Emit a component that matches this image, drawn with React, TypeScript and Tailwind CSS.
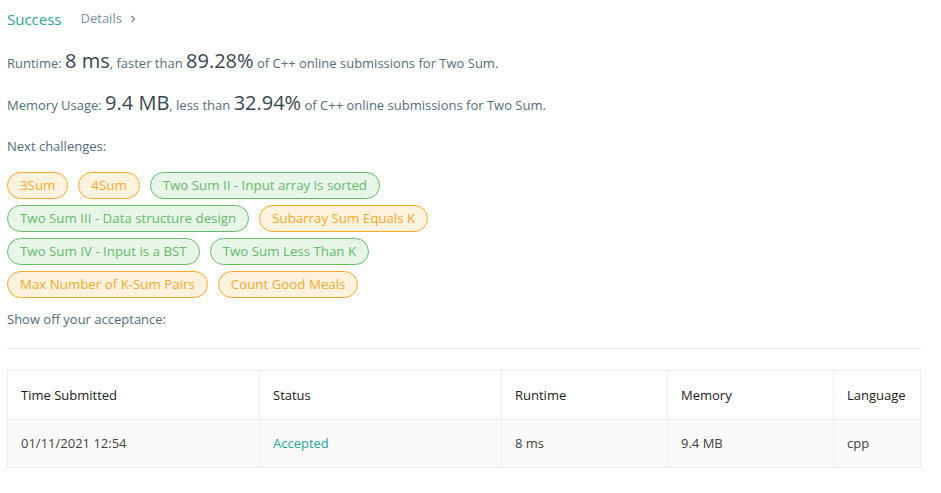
import React from 'react';

type Tag = { label: string; tone: 'orange' | 'green' };

const rows: Tag[][] = [
  [
    { label: '3Sum', tone: 'orange' },
    { label: '4Sum', tone: 'orange' },
    { label: 'Two Sum II - Input array is sorted', tone: 'green' },
  ],
  [
    { label: 'Two Sum III - Data structure design', tone: 'green' },
    { label: 'Subarray Sum Equals K', tone: 'orange' },
  ],
  [
    { label: 'Two Sum IV - Input is a BST', tone: 'green' },
    { label: 'Two Sum Less Than K', tone: 'green' },
  ],
  [
    { label: 'Max Number of K-Sum Pairs', tone: 'orange' },
    { label: 'Count Good Meals', tone: 'orange' },
  ],
];

const columns = [
  { head: 'Time Submitted', value: '01/11/2021 12:54', w: 'w-[251px]' },
  { head: 'Status', value: 'Accepted', w: 'w-[242px]' },
  { head: 'Runtime', value: '8 ms', w: 'w-[166px]' },
  { head: 'Memory', value: '9.4 MB', w: 'w-[166px]' },
  { head: 'Language', value: 'cpp', w: 'flex-1' },
];

export default function App() {
  return (
    <div className="w-[941px] h-[493px] bg-white px-[7px] pt-[6px] text-[13px] text-[#546e7a] font-['Open_Sans',sans-serif]">
      <div className="flex items-center h-[26px]">
        <span className="text-[15px] text-[#26a69a]">Success</span>
        <span className="ml-[19px] text-[13px] text-[#78909c] flex items-center">
          Details
          <svg className="ml-[7px] w-[8px] h-[8px]" viewBox="0 0 8 8" fill="none" stroke="#78909c" strokeWidth="1.4">
            <path d="M2.5 1 L5.5 4 L2.5 7" />
          </svg>
        </span>
      </div>

      <p className="mt-[14px] h-[26px] flex items-baseline">
        <span>Runtime:&nbsp;</span>
        <span className="text-[20px] text-[#37474f]">8 ms</span>
        <span>, faster than&nbsp;</span>
        <span className="text-[20px] text-[#37474f]">89.28%</span>
        <span>&nbsp;of C++ online submissions for Two Sum.</span>
      </p>

      <p className="mt-[16px] h-[26px] flex items-baseline">
        <span>Memory Usage:&nbsp;</span>
        <span className="text-[20px] text-[#37474f]">9.4 MB</span>
        <span>, less than&nbsp;</span>
        <span className="text-[20px] text-[#37474f]">32.94%</span>
        <span>&nbsp;of C++ online submissions for Two Sum.</span>
      </p>

      <p className="mt-[22px] h-[20px] leading-[20px]">Next challenges:</p>

      <div className="mt-[16px] flex flex-col gap-[6px]">
        {rows.map((row, i) => (
          <div key={i} className="flex gap-[10px]">
            {row.map((t) => (
              <span
                key={t.label}
                className={`h-[27px] px-[12px] rounded-full border leading-[25px] text-[13.3px] ${
                  t.tone === 'orange'
                    ? 'border-[#ffa726] bg-[#fff3e0] text-[#ffa726]'
                    : 'border-[#66bb6a] bg-[#e8f5e9] text-[#66bb6a]'
                }`}
              >
                {t.label}
              </span>
            ))}
          </div>
        ))}
      </div>

      <p className="mt-[11px] h-[20px] leading-[20px]">Show off your acceptance:</p>

      <div className="mt-[19px] w-[914px] border-t border-[#eeeeee]" />

      <div className="mt-[21px] w-[914px] border border-[#eeeeee] text-[13px]">
        <div className="flex h-[48px] bg-white text-[#212121]">
          {columns.map((c, i) => (
            <div key={c.head} className={`${c.w} px-[13px] pt-[2px] flex items-center ${i > 0 ? 'border-l border-[#eeeeee]' : ''}`}>
              {c.head}
            </div>
          ))}
        </div>
        <div className="flex h-[48px] bg-[#fafafa] border-t border-[#eeeeee] text-[#424242]">
          {columns.map((c, i) => (
            <div
              key={c.head}
              className={`${c.w} px-[13px] flex items-center ${i > 0 ? 'border-l border-[#eeeeee]' : ''} ${
                c.head === 'Status' ? 'text-[#26a69a]' : ''
              }`}
            >
              {c.value}
            </div>
          ))}
        </div>
      </div>
    </div>
  );
}
